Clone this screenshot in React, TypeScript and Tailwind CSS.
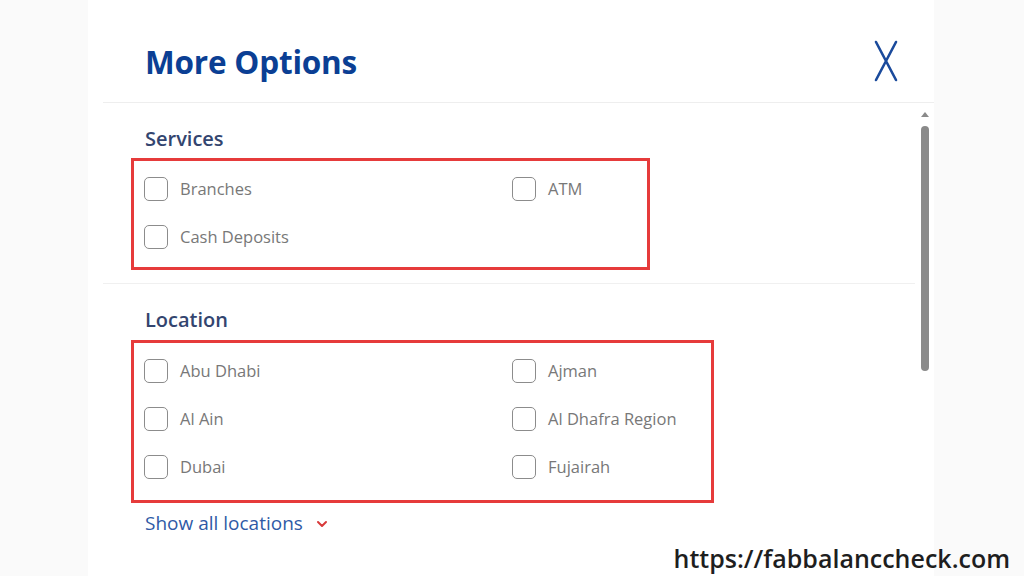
import React from "react";

function Box({ label }: { label: string }) {
  return (
    <div className="flex items-center h-6">
      <div className="w-6 h-6 rounded-[5px] border-[1.5px] border-[#8c8c8c] bg-white shrink-0" />
      <span className="ml-3 text-[16.5px] text-[#787878] leading-none" style={{ fontFamily: '"Open Sans", sans-serif' }}>
        {label}
      </span>
    </div>
  );
}

export default function App() {
  const services = [
    ["Branches", "ATM"],
    ["Cash Deposits", ""],
  ];
  const locations = [
    ["Abu Dhabi", "Ajman"],
    ["Al Ain", "Al Dhafra Region"],
    ["Dubai", "Fujairah"],
  ];
  return (
    <div className="w-[1024px] h-[576px] bg-[#fafafa] relative overflow-hidden" style={{ fontFamily: '"Open Sans", sans-serif' }}>
      <div className="ml-[88px] w-[846px] h-full bg-white flex flex-col">
        {/* header */}
        <div className="ml-[15px] h-[103px] border-b border-[#eeeeee] flex items-start justify-between shrink-0">
          <h1 className="pl-[42px] pt-[42px] text-[31.5px] font-bold text-[#0b3f94] leading-[40px] tracking-[-0.2px]">More Options</h1>
          <svg width="26" height="42" viewBox="0 0 26 42" className="mt-[40px] mr-[35px]">
            <path d="M3 2 L23 40 M23 2 L3 40" stroke="#1a4a9c" strokeWidth="2.6" strokeLinecap="round" fill="none" />
          </svg>
        </div>
        {/* body */}
        <div className="flex flex-1">
          <div className="w-[812px] ml-[15px]">
            <div className="border-b border-[#f0f0f0] pb-[13px]">
              <h2 className="pl-[42px] pt-[22px] text-[20px] font-semibold text-[#33456f] leading-[28px]">Services</h2>
              <div className="ml-[28px] mt-[5px] w-[519px] border-[3px] border-[#e63b3b] pt-[16px] pb-[18px] pl-[10px] flex flex-col gap-6">
                {services.map((r, i) => (
                  <div key={i} className="grid grid-cols-[368px_1fr]">
                    <Box label={r[0]} />
                    {r[1] ? <Box label={r[1]} /> : <div />}
                  </div>
                ))}
              </div>
            </div>
            <h2 className="pl-[42px] pt-[22px] text-[20px] font-semibold text-[#33456f] leading-[28px]">Location</h2>
            <div className="ml-[28px] mt-[6px] w-[583px] border-[3px] border-[#e63b3b] pt-[16px] pb-[21px] pl-[10px] flex flex-col gap-6">
              {locations.map((r, i) => (
                <div key={i} className="grid grid-cols-[368px_1fr]">
                  <Box label={r[0]} />
                  <Box label={r[1]} />
                </div>
              ))}
            </div>
            <div className="pl-[42px] mt-[8px] flex items-center text-[19px] text-[#2f5aa6] leading-[24px]">
              <span>Show all locations</span>
              <svg width="12" height="8" viewBox="0 0 12 8" className="ml-[13px] mt-[2px]">
                <path d="M2 2 L6 6 L10 2" stroke="#d83a3a" strokeWidth="2" fill="none" strokeLinecap="round" strokeLinejoin="round" />
              </svg>
            </div>
          </div>
          <div className="w-[19px] flex flex-col items-center pt-[8px]">
            <svg width="10" height="6" viewBox="0 0 10 6">
              <path d="M1 6 L5 1 L9 6 Z" fill="#8a8a8a" />
            </svg>
            <div className="mt-[9px] w-[8px] h-[245px] rounded-full bg-[#8a8a8a]" />
          </div>
        </div>
      </div>
      <div className="absolute right-[14px] bottom-[2px] text-[25px] font-semibold text-[#1e1e1e] leading-[32px]" style={{ fontFamily: '"Open Sans", sans-serif' }}>
        https://fabbalanccheck.com
      </div>
    </div>
  );
}
